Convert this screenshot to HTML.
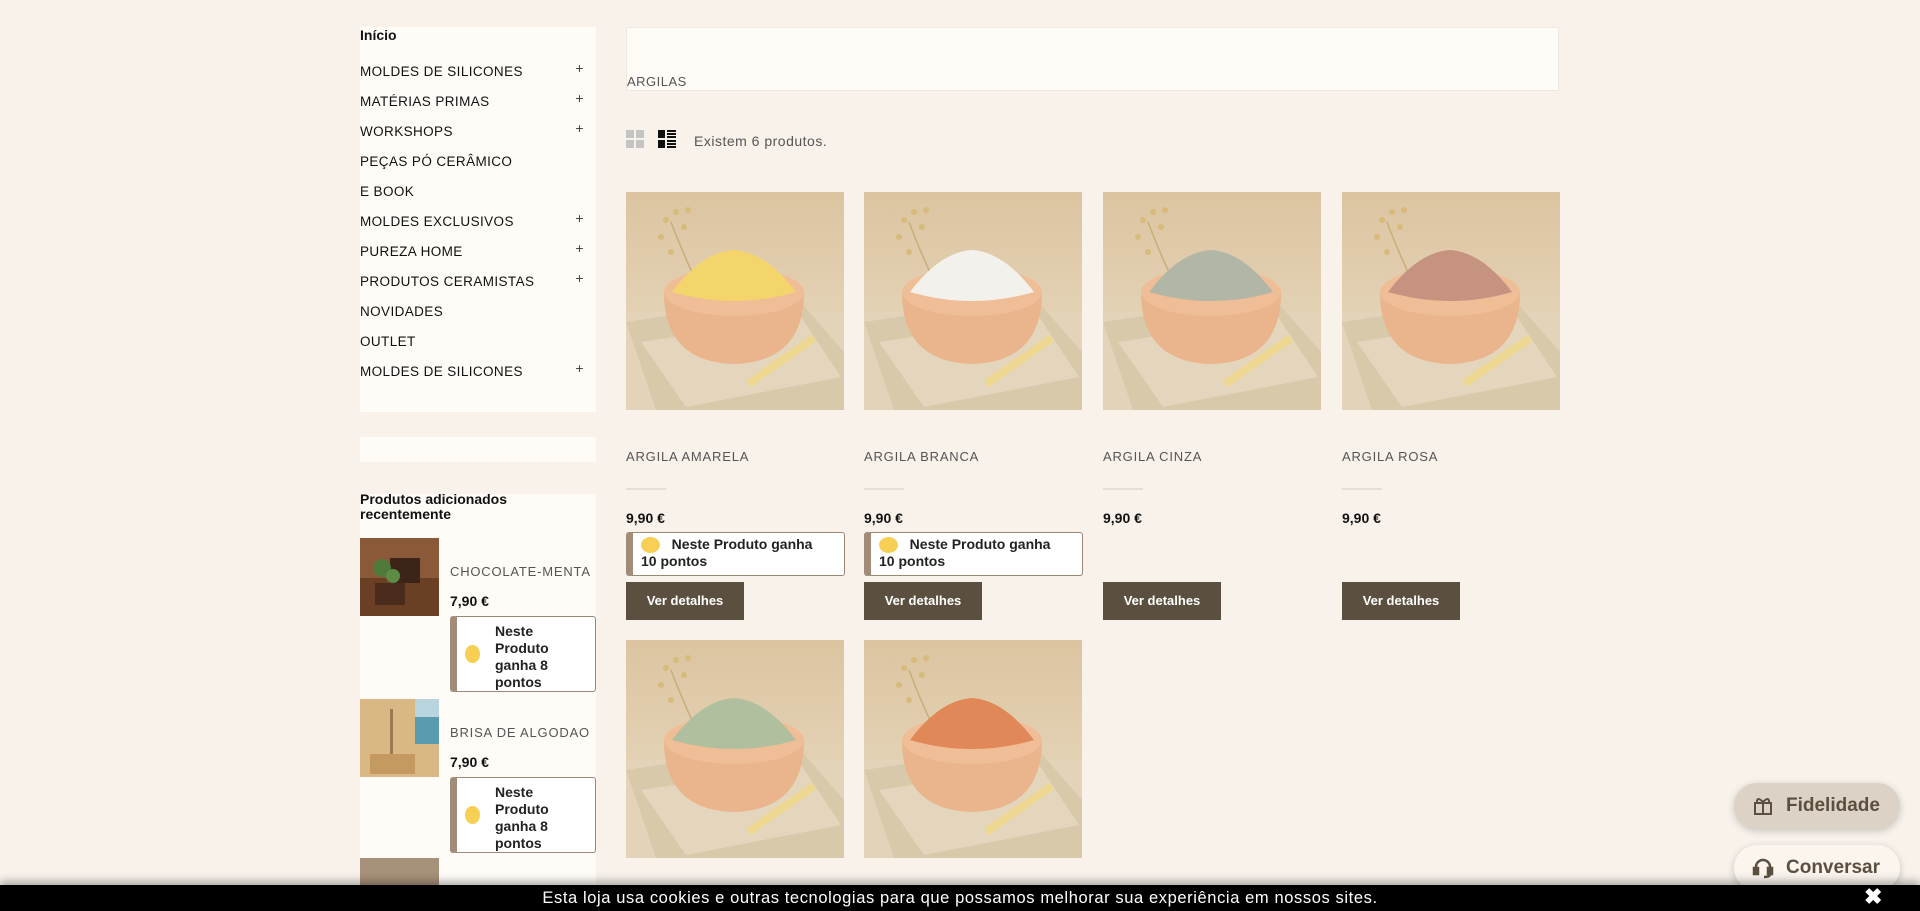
<!DOCTYPE html>
<html><head><meta charset="utf-8"><style>
*{margin:0;padding:0;box-sizing:border-box}
body{width:1920px;height:911px;overflow:hidden;background:#f8f2eb;font-family:"Liberation Sans",sans-serif;position:relative;color:#111}
.a{position:absolute}
.box{background:#fffcf7}
.menu div{position:absolute;left:0;font-size:13.5px;letter-spacing:.4px;color:#111;width:230px}
.menu div span{position:absolute;right:6px;top:-4px;font-size:14px;color:#444}
.pname{font-size:13px;letter-spacing:.8px;color:#555}
.line{height:2px;width:40px;background:#e6ddd4}
.price{font-weight:bold;font-size:14px;color:#111}
.pts{background:#fff;border:1px solid #9a8774;border-left:7px solid #a08c78;border-radius:3px;font-weight:bold;font-size:14px;color:#222;line-height:17px}
.coin{display:inline-block;width:19px;height:16px;border-radius:50%;background:#f8cf55;vertical-align:middle}
.btn{background:#5b4f40;color:#fff;font-weight:bold;font-size:13px;text-align:center;line-height:38px;width:118px;height:38px}
</style></head><body>

<div class="a box" style="left:360px;top:27px;width:236px;height:385px"></div>
<div class="a" style="left:360px;top:27px;font-weight:bold;font-size:14px">Início</div>
<div class="a menu" style="left:360px;top:0;width:236px">
<div style="top:64px">MOLDES DE SILICONES<span>+</span></div>
<div style="top:94px">MATÉRIAS PRIMAS<span>+</span></div>
<div style="top:124px">WORKSHOPS<span>+</span></div>
<div style="top:154px">PEÇAS PÓ CERÂMICO</div>
<div style="top:184px">E BOOK</div>
<div style="top:214px">MOLDES EXCLUSIVOS<span>+</span></div>
<div style="top:244px">PUREZA HOME<span>+</span></div>
<div style="top:274px">PRODUTOS CERAMISTAS<span>+</span></div>
<div style="top:304px">NOVIDADES</div>
<div style="top:334px">OUTLET</div>
<div style="top:364px">MOLDES DE SILICONES<span>+</span></div>
</div>
<div class="a box" style="left:360px;top:437px;width:236px;height:25px"></div>
<div class="a box" style="left:360px;top:494px;width:236px;height:417px"></div>
<div class="a" style="left:360px;top:492px;font-weight:bold;font-size:14px;line-height:15px">Produtos adicionados<br>recentemente</div>

<svg class="a" style="left:360px;top:538px" width="79" height="78"><rect width="79" height="78" fill="#8a5a38"/><rect y="40" width="79" height="38" fill="#6b3f24"/><rect x="30" y="20" width="30" height="25" fill="#3d2418"/><rect x="15" y="45" width="30" height="22" fill="#4a2c1c"/><circle cx="22" cy="30" r="9" fill="#4f7a3a"/><circle cx="33" cy="38" r="7" fill="#5d8c44"/></svg>
<div class="a pname" style="left:450px;top:564px">CHOCOLATE-MENTA</div>
<div class="a price" style="left:450px;top:593px">7,90 €</div>
<div class="a pts" style="left:450px;top:616px;width:146px;height:76px;padding:6px 0 0 38px"><span class="coin a" style="left:8px;top:28px;width:15px;height:18px"></span>Neste<br>Produto<br>ganha 8<br>pontos</div>

<svg class="a" style="left:360px;top:699px" width="79" height="78"><rect width="79" height="78" fill="#d9b885"/><rect x="55" y="0" width="24" height="45" fill="#5a9bb0"/><rect x="55" y="0" width="24" height="18" fill="#b8d4dc"/><rect x="10" y="55" width="45" height="20" fill="#c49a60"/><rect x="30" y="10" width="3" height="45" fill="#9a7a50"/></svg>
<div class="a pname" style="left:450px;top:725px">BRISA DE ALGODAO</div>
<div class="a price" style="left:450px;top:754px">7,90 €</div>
<div class="a pts" style="left:450px;top:777px;width:146px;height:76px;padding:6px 0 0 38px"><span class="coin a" style="left:8px;top:28px;width:15px;height:18px"></span>Neste<br>Produto<br>ganha 8<br>pontos</div>
<div class="a" style="left:360px;top:858px;width:79px;height:30px;background:#a8917a"></div>

<div class="a box" style="left:626px;top:27px;width:933px;height:64px;border:1px solid #efe8e0"></div>
<div class="a" style="left:627px;top:74px;font-size:13px;letter-spacing:.5px;color:#555">ARGILAS</div>
<svg class="a" style="left:626px;top:130px" width="60" height="20"><g fill="#c4c4c4"><rect x="0" y="0" width="8" height="8"/><rect x="10" y="0" width="8" height="8"/><rect x="0" y="10" width="8" height="8"/><rect x="10" y="10" width="8" height="8"/></g><g fill="#111"><rect x="32" y="0" width="7" height="8"/><rect x="32" y="10" width="7" height="8"/><rect x="41" y="0" width="9" height="2"/><rect x="41" y="3" width="9" height="2"/><rect x="41" y="6" width="9" height="2"/><rect x="41" y="10" width="9" height="2"/><rect x="41" y="13" width="9" height="2"/><rect x="41" y="16" width="9" height="2"/></g></svg>
<div class="a" style="left:694px;top:133px;font-size:14px;color:#555;letter-spacing:.5px">Existem 6 produtos.</div>

<svg width="0" height="0" style="position:absolute"><defs>
<linearGradient id="bg" x1="0" y1="0" x2="0" y2="1"><stop offset="0" stop-color="#dcc4a0"/><stop offset="1" stop-color="#e9dcc5"/></linearGradient>
<g id="scene"><rect width="218" height="218" fill="url(#bg)"/><rect y="120" width="218" height="98" fill="#e3d4b9"/><polygon points="0,130 170,105 218,160 218,218 30,218" fill="#d9c9ab"/><polygon points="15,150 175,125 215,185 60,215" fill="#e4d6bc"/><path d="M45 30 q15 40 40 90" stroke="#c9ad78" fill="none" stroke-width="1.5"/><g fill="#d8bb7a"><circle cx="40" cy="28" r="3"/><circle cx="50" cy="20" r="3"/><circle cx="58" cy="35" r="3"/><circle cx="35" cy="45" r="3"/><circle cx="62" cy="18" r="3"/><circle cx="45" cy="60" r="3"/></g><path d="M38 100 q0 70 70 72 q70 -2 70 -72 z" fill="#eab48c"/><ellipse cx="108" cy="100" rx="70" ry="24" fill="#efbd96"/><rect x="115" y="165" width="80" height="8" fill="#eed891" transform="rotate(-35 155 169)"/></g>
</defs></svg>

<svg class="a" style="left:626px;top:192px" width="218" height="218"><use href="#scene"/><path d="M46 100 q30 -40 62 -42 q32 2 62 42 q-62 18 -124 0z" fill="#f4d56c"/></svg>
<svg class="a" style="left:864px;top:192px" width="218" height="218"><use href="#scene"/><path d="M46 100 q30 -40 62 -42 q32 2 62 42 q-62 18 -124 0z" fill="#f3f1ec"/></svg>
<svg class="a" style="left:1103px;top:192px" width="218" height="218"><use href="#scene"/><path d="M46 100 q30 -40 62 -42 q32 2 62 42 q-62 18 -124 0z" fill="#b2b6a6"/></svg>
<svg class="a" style="left:1342px;top:192px" width="218" height="218"><use href="#scene"/><path d="M46 100 q30 -40 62 -42 q32 2 62 42 q-62 18 -124 0z" fill="#c69381"/></svg>
<svg class="a" style="left:626px;top:640px" width="218" height="218"><use href="#scene"/><path d="M46 100 q30 -40 62 -42 q32 2 62 42 q-62 18 -124 0z" fill="#b0bf9e"/></svg>
<svg class="a" style="left:864px;top:640px" width="218" height="218"><use href="#scene"/><path d="M46 100 q30 -40 62 -42 q32 2 62 42 q-62 18 -124 0z" fill="#e08858"/></svg>

<div class="a pname" style="left:626px;top:449px">ARGILA AMARELA</div>
<div class="a pname" style="left:864px;top:449px">ARGILA BRANCA</div>
<div class="a pname" style="left:1103px;top:449px">ARGILA CINZA</div>
<div class="a pname" style="left:1342px;top:449px">ARGILA ROSA</div>
<div class="a line" style="left:626px;top:488px"></div>
<div class="a line" style="left:864px;top:488px"></div>
<div class="a line" style="left:1103px;top:488px"></div>
<div class="a line" style="left:1342px;top:488px"></div>
<div class="a price" style="left:626px;top:510px">9,90 €</div>
<div class="a price" style="left:864px;top:510px">9,90 €</div>
<div class="a price" style="left:1103px;top:510px">9,90 €</div>
<div class="a price" style="left:1342px;top:510px">9,90 €</div>
<div class="a pts" style="left:626px;top:532px;width:219px;height:44px;padding:3px 0 0 8px"><span class="coin"></span>&nbsp;&nbsp; Neste Produto ganha<br>10 pontos</div>
<div class="a pts" style="left:864px;top:532px;width:219px;height:44px;padding:3px 0 0 8px"><span class="coin"></span>&nbsp;&nbsp; Neste Produto ganha<br>10 pontos</div>
<div class="a btn" style="left:626px;top:582px">Ver detalhes</div>
<div class="a btn" style="left:864px;top:582px">Ver detalhes</div>
<div class="a btn" style="left:1103px;top:582px">Ver detalhes</div>
<div class="a btn" style="left:1342px;top:582px">Ver detalhes</div>

<div class="a" style="left:1734px;top:783px;width:166px;height:46px;border-radius:23px;background:#dcd3c6;box-shadow:0 2px 8px rgba(0,0,0,.2);font-weight:bold;font-size:19px;color:#5b4f40;line-height:46px;padding-left:52px">Fidelidade</div>
<svg class="a" style="left:1753px;top:796px" width="20" height="20" fill="none" stroke="#5b4f40" stroke-width="2"><rect x="2" y="7" width="16" height="11"/><line x1="1" y1="7" x2="19" y2="7"/><line x1="10" y1="7" x2="10" y2="18"/><path d="M10 6 q-6 -6 -6 0 M10 6 q6 -6 6 0"/></svg>
<div class="a" style="left:1734px;top:845px;width:166px;height:46px;border-radius:23px;background:#fbf5ee;box-shadow:0 2px 8px rgba(0,0,0,.2);font-weight:bold;font-size:19px;color:#5b4f40;line-height:46px;padding-left:52px">Conversar</div>
<svg class="a" style="left:1752px;top:857px" width="22" height="22" fill="none" stroke="#5b4f40" stroke-width="2.5"><path d="M4 13 v-3 a7 7 0 0 1 14 0 v3"/><rect x="2" y="11" width="4" height="6" fill="#5b4f40"/><rect x="16" y="11" width="4" height="6" fill="#5b4f40"/><path d="M18 17 q0 3 -6 3"/></svg>

<div class="a" style="left:0;top:885px;width:1920px;height:26px;background:#000;color:#fff;font-size:16.5px;text-align:center;line-height:26px;letter-spacing:.6px;box-shadow:0 -4px 8px rgba(0,0,0,.3)">Esta loja usa cookies e outras tecnologias para que possamos melhorar sua experiência em nossos sites.</div>
<div class="a" style="left:1864px;top:884px;color:#fff;font-weight:bold;font-size:22px;line-height:26px">✖</div>
</body></html>
